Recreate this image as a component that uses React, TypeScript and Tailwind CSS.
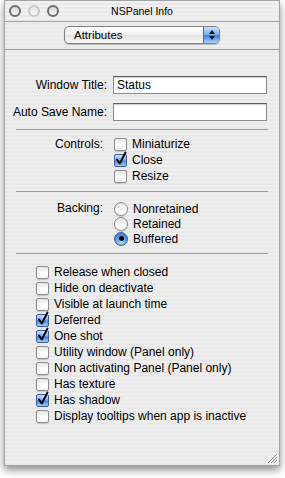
import React from "react";

const font = { fontFamily: '"Liberation Sans", Arial, sans-serif' };

function CheckBox({ checked }: { checked?: boolean }) {
  return (
    <span className="relative inline-block w-[13px] h-[13px] shrink-0">
      {checked ? (
        <span className="absolute inset-0 rounded-[2px] border border-[#3d5f96] bg-[linear-gradient(to_bottom,#cfe3fb_0%,#7fb0ee_45%,#3f82de_55%,#9fd0ff_100%)]" />
      ) : (
        <span className="absolute inset-0 rounded-[2px] border border-[#8c8c8c] bg-[linear-gradient(to_bottom,#e6e6e6_0%,#ffffff_60%,#f4f4f4_100%)] shadow-[0_1px_1px_rgba(0,0,0,0.15)]" />
      )}
      {checked && (
        <svg className="absolute left-0 top-[-3px]" width="14" height="15" viewBox="0 0 14 15">
          <path d="M3 8.5 L5.8 12.5 L11.5 1.5" fill="none" stroke="#000" strokeWidth="1.9" strokeLinecap="round" strokeLinejoin="round" />
        </svg>
      )}
    </span>
  );
}

function Radio({ on }: { on?: boolean }) {
  return (
    <span
      className={
        "relative inline-flex items-center justify-center w-[14px] h-[14px] rounded-full shrink-0 border " +
        (on
          ? "border-[#3d5f96] bg-[radial-gradient(circle_at_50%_80%,#a9d6ff_0%,#5a9ae8_50%,#2e6ccf_100%)]"
          : "border-[#8c8c8c] bg-[linear-gradient(to_bottom,#e4e4e4_0%,#ffffff_70%,#f2f2f2_100%)] shadow-[0_1px_1px_rgba(0,0,0,0.15)]")
      }
    >
      {on && <span className="w-[5px] h-[5px] rounded-full bg-black" />}
    </span>
  );
}

function Row({ children, h = "h-[16px]" }: { children: React.ReactNode; h?: string }) {
  return <div className={"flex items-center gap-[5px] " + h}>{children}</div>;
}

function Sep({ full }: { full?: boolean }) {
  return <div className={"h-px bg-[#9c9c9c] " + (full ? "" : "ml-[11px] mr-[11px]")} />;
}

const options: [string, boolean][] = [
  ["Release when closed", false],
  ["Hide on deactivate", false],
  ["Visible at launch time", false],
  ["Deferred", true],
  ["One shot", true],
  ["Utility window (Panel only)", false],
  ["Non activating Panel (Panel only)", false],
  ["Has texture", false],
  ["Has shadow", true],
  ["Display tooltips when app is inactive", false],
];

export default function App() {
  return (
    <div className="w-[285px] h-[478px] bg-white overflow-hidden text-[12px] text-black" style={font}>
      <div className="ml-[4px] w-[276px] h-[466px] flex flex-col border border-[#a3a3a3] shadow-[0_4px_8px_rgba(0,0,0,0.45)] bg-[repeating-linear-gradient(to_bottom,#efefef_0px,#efefef_2px,#e8e8e8_2px,#e8e8e8_4px)]">
        {/* title bar */}
        <div className="relative h-[21px] border-b border-[#a0a0a0] flex items-center justify-center bg-[repeating-linear-gradient(to_bottom,#f1f1f1_0px,#f1f1f1_2px,#e9e9e9_2px,#e9e9e9_4px)]">
          <div className="absolute left-[4px] top-[4px] flex gap-[7px]">
            <span className="w-[12px] h-[12px] rounded-full border-[2px] border-[#6d6d6d] bg-[linear-gradient(to_bottom,#d8d8d8,#f4f4f4)]" />
            <span className="w-[12px] h-[12px] rounded-full border-[2px] border-[#c8c8c8] bg-[linear-gradient(to_bottom,#e8e8e8,#f7f7f7)]" />
            <span className="w-[12px] h-[12px] rounded-full border-[2px] border-[#6d6d6d] bg-[linear-gradient(to_bottom,#d8d8d8,#f4f4f4)]" />
          </div>
          <span className="text-[10.5px] leading-none">NSPanel Info</span>
        </div>

        {/* popup */}
        <div className="mt-[4px] flex justify-center">
          <div className="w-[156px] h-[18px] rounded-[5px] border border-[#7f7f7f] flex overflow-hidden shadow-[0_1px_1px_rgba(0,0,0,0.2)] bg-[linear-gradient(to_bottom,#ffffff_0%,#f0f0f0_50%,#e2e2e2_51%,#fafafa_100%)]">
            <span className="flex-1 pl-[9px] leading-[16px] text-[11.5px]">Attributes</span>
            <span className="w-[16px] h-full border-l border-[#4a6fa8] flex flex-col items-center justify-center gap-[2px] bg-[linear-gradient(to_bottom,#c6e0fb_0%,#79aef0_48%,#3d80de_52%,#a6d3fe_100%)]">
              <svg width="6" height="4" viewBox="0 0 6 4"><path d="M0 4 L3 0 L6 4 Z" fill="#111" /></svg>
              <svg width="6" height="4" viewBox="0 0 6 4"><path d="M0 0 L3 4 L6 0 Z" fill="#111" /></svg>
            </span>
          </div>
        </div>
        <div className="mt-[5px]">
          <Sep full />
        </div>

        {/* text fields */}
        <div className="mt-[26px] flex flex-col gap-[9px]">
          {[
            ["Window Title:", "Status"],
            ["Auto Save Name:", ""],
          ].map(([l, v]) => (
            <div key={l} className="flex items-center">
              <span className="w-[103px] text-right pr-[1px] whitespace-nowrap">{l}</span>
              <span className="ml-[5px] w-[154px] h-[18px] bg-white border border-[#8a8a8a] border-t-[#5e5e5e] shadow-[inset_0_1px_1px_rgba(0,0,0,0.2)] pl-[3px] leading-[16px]">
                {v}
              </span>
            </div>
          ))}
        </div>
        <div className="mt-[8px]">
          <Sep />
        </div>

        {/* controls */}
        <div className="mt-[6px] flex">
          <span className="w-[98px] text-right leading-[16px]">Controls:</span>
          <div className="ml-[11px] flex flex-col">
            <Row><CheckBox /><span>Miniaturize</span></Row>
            <Row><CheckBox checked /><span>Close</span></Row>
            <Row><CheckBox /><span>Resize</span></Row>
          </div>
        </div>
        <div className="mt-[7px]">
          <Sep />
        </div>

        {/* backing */}
        <div className="mt-[9px] flex">
          <span className="w-[98px] text-right leading-[15px]">Backing:</span>
          <div className="ml-[11px] flex flex-col">
            <Row h="h-[15px]"><Radio /><span>Nonretained</span></Row>
            <Row h="h-[15px]"><Radio /><span>Retained</span></Row>
            <Row h="h-[15px]"><Radio on /><span>Buffered</span></Row>
          </div>
        </div>
        <div className="mt-[7px]">
          <Sep />
        </div>

        {/* options */}
        <div className="mt-[10px] ml-[31px] flex flex-col">
          {options.map(([t, c]) => (
            <Row key={t}>
              <CheckBox checked={c} />
              <span className="whitespace-nowrap">{t}</span>
            </Row>
          ))}
        </div>

        <div className="flex-1" />
        <div className="flex justify-end pr-[1px] pb-[1px]">
          <svg width="11" height="11" viewBox="0 0 11 11">
            <path d="M10 1 L1 10 M10 4 L4 10 M10 7 L7 10" stroke="#8a8a8a" strokeWidth="1" />
            <path d="M11 2 L2 11 M11 5 L5 11 M11 8 L8 11" stroke="#ffffff" strokeWidth="1" />
          </svg>
        </div>
      </div>
    </div>
  );
}
